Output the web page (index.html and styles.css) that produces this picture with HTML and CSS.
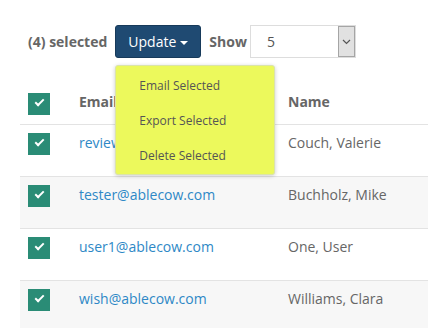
FILE: index.html
```html
<!DOCTYPE html>
<html lang="en">
<head>
    <meta charset="UTF-8">
    <title>Users</title>
    <link rel="stylesheet" href="styles.css">
</head>
<body>

<div class="toolbar">
    <span class="count">(4) selected</span>
    <div class="menu-wrap">
        <button class="btn-update">Update <span class="caret"></span></button>
        <ul class="menu">
            <li>Email Selected</li>
            <li>Export Selected</li>
            <li>Delete Selected</li>
        </ul>
    </div>
    <span class="show-label">Show</span>
    <div class="select">
        <span class="select-value">5</span>
        <span class="select-arrow">
            <svg width="9" height="6" viewBox="0 0 9 6"><path d="M1 1 L4.5 4.5 L8 1" fill="none" stroke="#555" stroke-width="1.2"/></svg>
        </span>
    </div>
</div>

<table class="users">
    <tr class="head">
        <td class="col-check"><span class="check"></span></td>
        <td class="col-email">Email</td>
        <td class="col-name">Name</td>
    </tr>
    <tr>
        <td class="col-check"><span class="check"></span></td>
        <td class="col-email"><a href="#">reviewer@ablecow.com</a></td>
        <td class="col-name">Couch, Valerie</td>
    </tr>
    <tr class="alt">
        <td class="col-check"><span class="check"></span></td>
        <td class="col-email"><a href="#">tester@ablecow.com</a></td>
        <td class="col-name">Buchholz, Mike</td>
    </tr>
    <tr>
        <td class="col-check"><span class="check"></span></td>
        <td class="col-email"><a href="#">user1@ablecow.com</a></td>
        <td class="col-name">One, User</td>
    </tr>
    <tr class="alt">
        <td class="col-check"><span class="check"></span></td>
        <td class="col-email"><a href="#">wish@ablecow.com</a></td>
        <td class="col-name">Williams, Clara</td>
    </tr>
</table>

</body>
</html>
```

FILE: styles.css
```css
body {
    font-family: "Open Sans", Arial, sans-serif;
    margin: 0;
    padding: 25px 0 0 20px;
    background-color: #fff;
    color: #666;
    overflow: hidden;
}
.toolbar {
    display: flex;
    align-items: center;
    padding-left: 8px;
    height: 33px;
}
.count {
    font-size: 14px;
    font-weight: bold;
    color: #666;
    margin-right: 8px;
}
.menu-wrap {
    position: relative;
}
.btn-update {
    font-family: inherit;
    font-size: 14px;
    color: white;
    background-color: #1f4a72;
    border: 1px solid #173a5a;
    border-radius: 3px;
    height: 33px;
    width: 86px;
    padding: 0;
    display: flex;
    align-items: center;
    justify-content: center;
    gap: 4px;
}
.caret {
    width: 0;
    height: 0;
    border-left: 4px solid transparent;
    border-right: 4px solid transparent;
    border-top: 4px solid white;
    margin-top: 2px;
}
.menu {
    position: absolute;
    top: 40px;
    left: 0;
    width: 160px;
    height: 110px;
    margin: 0;
    padding: 10px 0 0;
    box-sizing: border-box;
    list-style: none;
    background-color: #ecf95c;
    border: 1px solid #dbe4a8;
    border-radius: 3px;
    box-shadow: 0 1px 4px rgba(0, 0, 0, 0.2);
    z-index: 2;
}
.menu li {
    font-size: 12px;
    color: #555;
    padding: 0 0 0 23px;
    height: 35px;
    line-height: 20px;
}
.show-label {
    font-size: 14px;
    font-weight: bold;
    color: #666;
    margin: 0 3px 0 8px;
}
.select {
    display: flex;
    align-items: center;
    justify-content: space-between;
    width: 106px;
    height: 33px;
    box-sizing: border-box;
    border: 1px solid #ddd;
    padding: 0 0 0 16px;
}
.select-value {
    font-size: 14px;
    color: #555;
}
.select-arrow {
    width: 17px;
    height: 31px;
    box-sizing: border-box;
    background-color: #e1e1e1;
    border: 1px solid #a5a5a5;
    display: flex;
    align-items: center;
    justify-content: center;
}
.users {
    border-collapse: collapse;
    width: 408px;
    margin-top: 27px;
}
.users td {
    vertical-align: top;
    padding: 8px;
    font-size: 14px;
    height: 35px;
    box-sizing: border-box;
    border-bottom: 1px solid #e3e3e3;
    line-height: 20px;
}
.users tr {
    height: 52px;
}
.users tr.head {
    height: 39px;
}
.users tr.head td {
    height: 38px;
    font-weight: bold;
    color: #666;
    padding-top: 7px;
}
.users tr.alt td {
    background-color: #f7f7f7;
}
.col-check {
    width: 51px;
}
.col-email {
    width: 209px;
}
.users a {
    color: #2e88c6;
    text-decoration: none;
}
.check {
    display: block;
    width: 22px;
    height: 22px;
    background-color: #2a8c76;
    position: relative;
}
.check::after {
    content: "";
    position: absolute;
    left: 7px;
    top: 6px;
    width: 7px;
    height: 3px;
    border-left: 2.5px solid white;
    border-bottom: 2.5px solid white;
    transform: rotate(-45deg);
}
.users tr.head .check {
    margin-top: 1px;
}
```
